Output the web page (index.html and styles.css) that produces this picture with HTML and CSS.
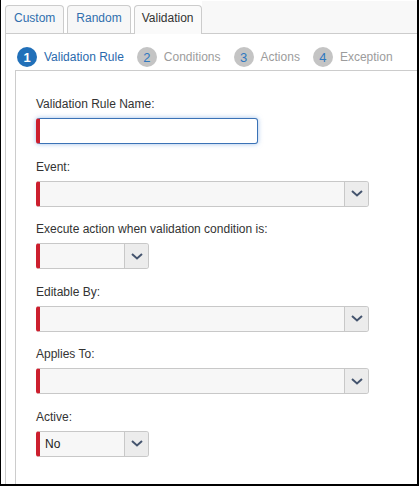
FILE: index.html
```html
<!DOCTYPE html>
<html>
<head>
<meta charset="utf-8">
<link rel="stylesheet" href="styles.css">
</head>
<body>
<div class="frame">
  <div class="tabbar">
    <div class="tab">Custom</div>
    <div class="tab">Random</div>
    <div class="tab active">Validation</div>
    <div class="filler"></div>
  </div>
  <div class="panel">
    <div class="steps">
      <div class="step current"><span class="num">1</span><span class="txt">Validation Rule</span></div>
      <div class="step"><span class="num">2</span><span class="txt">Conditions</span></div>
      <div class="step"><span class="num">3</span><span class="txt">Actions</span></div>
      <div class="step"><span class="num">4</span><span class="txt">Exception</span></div>
    </div>
    <div class="box">
      <div class="group">
        <label class="label">Validation Rule Name:</label>
        <div class="input"></div>
      </div>
      <div class="group">
        <label class="label">Event:</label>
        <div class="select wide"><span class="value"></span><span class="btn"><svg width="12" height="7" viewBox="0 0 12 7"><polyline points="1,1 6,5.5 11,1" fill="none" stroke="#44546e" stroke-width="2"/></svg></span></div>
      </div>
      <div class="group">
        <label class="label">Execute action when validation condition is:</label>
        <div class="select small"><span class="value"></span><span class="btn"><svg width="12" height="7" viewBox="0 0 12 7"><polyline points="1,1 6,5.5 11,1" fill="none" stroke="#44546e" stroke-width="2"/></svg></span></div>
      </div>
      <div class="group">
        <label class="label">Editable By:</label>
        <div class="select wide"><span class="value"></span><span class="btn"><svg width="12" height="7" viewBox="0 0 12 7"><polyline points="1,1 6,5.5 11,1" fill="none" stroke="#44546e" stroke-width="2"/></svg></span></div>
      </div>
      <div class="group">
        <label class="label">Applies To:</label>
        <div class="select wide"><span class="value"></span><span class="btn"><svg width="12" height="7" viewBox="0 0 12 7"><polyline points="1,1 6,5.5 11,1" fill="none" stroke="#44546e" stroke-width="2"/></svg></span></div>
      </div>
      <div class="group">
        <label class="label">Active:</label>
        <div class="select small"><span class="value">No</span><span class="btn"><svg width="12" height="7" viewBox="0 0 12 7"><polyline points="1,1 6,5.5 11,1" fill="none" stroke="#44546e" stroke-width="2"/></svg></span></div>
      </div>
    </div>
  </div>
</div>
</body>
</html>
```
FILE: styles.css
```css
* { box-sizing: border-box; }
html, body { margin: 0; padding: 0; background: #fff; }
body { font-family: "Liberation Sans", Arial, sans-serif; font-size: 12px; color: #333; }

.frame {
  width: 419px;
  height: 486px;
  overflow: hidden;
  background: #fff;
  border-left: 1px solid #000;
  border-right: 2px solid #000;
  border-bottom: 2px solid #000;
  padding: 1px 0 0 4px;
}

.tabbar {
  display: flex;
  align-items: flex-end;
  height: 32px;
}
.tab {
  height: 28px;
  padding: 0 8px 3px;
  margin-right: 3px;
  line-height: 24px;
  border: 1px solid #ccc;
  border-bottom: none;
  border-radius: 4px 4px 0 0;
  background: #f7f7f7;
  color: #2f6fae;
  white-space: nowrap;
}
.tab.active {
  height: 29px;
  margin-bottom: -1px;
  padding: 0 7px 4px;
  background: #fafafa;
  color: #333;
  position: relative;
  z-index: 1;
  margin-right: 0;
}
.filler {
  flex: 1;
  align-self: stretch;
  background: #f8f8f8;
}

.panel {
  border-top: 1px solid #ccc;
  border-left: 1px solid #ccc;
  padding-left: 9px;
  height: 500px;
}

.steps {
  display: flex;
  align-items: center;
  height: 20px;
  margin: 13px 0 3px 2px;
}
.step {
  display: flex;
  align-items: center;
  margin-right: 13px;
  white-space: nowrap;
}
.num {
  width: 20px;
  height: 20px;
  border-radius: 50%;
  background: #c4c4c4;
  color: #2f78c0;
  text-align: center;
  font-size: 13px;
  line-height: 21px;
  margin-right: 7px;
}
.txt { color: #9c9c9c; }
.step.current .num { background: #2170b9; color: #fff; font-weight: bold; }
.step.current .txt { color: #2a6aad; }

.box {
  border-top: 1px solid #ccc;
  border-left: 1px solid #ccc;
  padding: 25px 0 0 20px;
  width: 600px;
  height: 500px;
}

.group { margin-bottom: 14.5px; }
.label {
  display: block;
  line-height: 17px;
  margin-bottom: 5px;
  color: #333;
}

.input {
  width: 222px;
  height: 26px;
  border: 1px solid #3a72b6;
  border-left: 4px solid #cc1f2e;
  border-radius: 3px;
  background: #fff;
  box-shadow: 0 0 5px rgba(80, 140, 215, 0.55);
}

.select {
  display: flex;
  height: 26px;
  border: 1px solid #c8c8c8;
  border-left: 4px solid #cc1f2e;
  border-radius: 3px;
  background: #f7f7f7;
}
.select.wide { width: 333px; }
.select.small { width: 113px; }
.value {
  flex: 1;
  line-height: 24px;
  padding-left: 5px;
  color: #222;
}
.btn {
  width: 24px;
  border-left: 1px solid #c8c8c8;
  background: #ececec;
  display: flex;
  align-items: center;
  justify-content: center;
  border-radius: 0 2px 2px 0;
}
.btn svg { display: block; }
```
